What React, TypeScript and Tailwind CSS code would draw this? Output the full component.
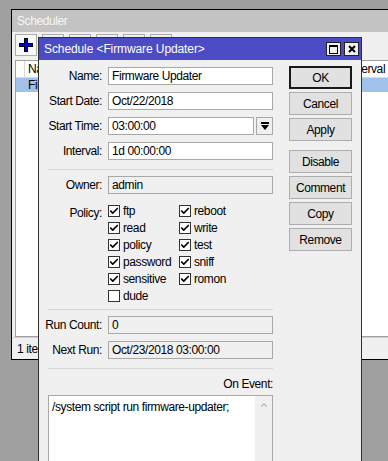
import { Check, ChevronUp } from 'lucide-react';

const font = { fontFamily: '"Liberation Sans", Arial, sans-serif' };

const policies: [string, boolean, string, boolean][] = [
  ['ftp', true, 'reboot', true],
  ['read', true, 'write', true],
  ['policy', true, 'test', true],
  ['password', true, 'sniff', true],
  ['sensitive', true, 'romon', true],
  ['dude', false, '', false],
];

function Box({ checked }: { checked: boolean }) {
  return (
    <span className="flex h-[12px] w-[12px] items-center justify-center border border-[#333] bg-white">
      {checked && <Check className="h-[10px] w-[10px] text-black" strokeWidth={4} />}
    </span>
  );
}

function Label({ text }: { text: string }) {
  return <span className="flex w-[54px] shrink-0 justify-end whitespace-nowrap">{text}</span>;
}

function Field({ label, value, readOnly }: { label: string; value: string; readOnly?: boolean }) {
  return (
    <div className="flex h-[18px] items-center">
      <Label text={label} />
      <div
        className={`ml-[6px] flex h-[18px] w-[165px] items-center border border-[#a8a8a8] px-[3px] ${
          readOnly ? 'bg-[#f0f0f0]' : 'bg-white'
        }`}
      >
        {value}
      </div>
    </div>
  );
}

function Btn({ label, primary }: { label: string; primary?: boolean }) {
  return (
    <div
      className={`flex h-[23px] w-[63px] items-center justify-center bg-[#e1e1e1] ${
        primary ? 'border-2 border-[#1a1a1a]' : 'border border-[#adadad]'
      }`}
    >
      {label}
    </div>
  );
}

export default function App() {
  return (
    <div
      className="relative h-[461px] w-[388px] overflow-hidden bg-[#a0a0a0] text-[12px] tracking-[-0.4px] text-black"
      style={font}
    >
      {/* Scheduler window behind */}
      <div className="absolute left-[11px] top-[9px] flex h-[351px] w-[400px] flex-col border border-black bg-[#f0f0f0]">
        <div className="flex h-[22px] items-center bg-[#c3c3c3] pl-[5px] text-[#f7f7f7]">Scheduler</div>
        <div className="flex h-[28px] items-start gap-[5px] px-[3px] pt-[2px]">
          <div className="flex h-[22px] w-[22px] items-center justify-center border border-[#adadad] bg-[#f7f7f7]">
            <svg width="14" height="14" viewBox="0 0 14 14">
              <path d="M5 0h4v5h5v4H9v5H5V9H0V5h5z" fill="#000" />
              <path d="M6 1h2v5h5v2H8v5H6V8H1V6h5z" fill="#0000e0" />
            </svg>
          </div>
          {[22, 22, 22, 22, 22].map((w, i) => (
            <div key={i} className="h-[22px] border border-[#adadad] bg-[#f0f0f0]" style={{ width: w }} />
          ))}
        </div>
        <div className="mx-[3px] flex flex-1 flex-col border border-[#a0a0a0] bg-white">
          <div className="flex h-[17px] items-center border-b border-[#d8d8d8]">
            <span className="h-full w-[9px] border-r border-[#d8d8d8]" />
            <span className="w-[321px] pl-[3px]">Name</span>
            <span className="pl-[3px]">Interval</span>
          </div>
          <div className="flex h-[14px] items-center bg-[#9fc1ea]">
            <span className="w-[9px]" />
            <span className="pl-[3px]">Firmware Updater</span>
          </div>
        </div>
        <div className="flex h-[22px] items-center border-t border-[#d0d0d0] pl-[5px]">1 item</div>
      </div>

      {/* Schedule dialog */}
      <div className="absolute left-[38px] top-[37px] flex h-[440px] w-[324px] flex-col border border-[#303030] bg-[#f0f0f0]">
        <div className="flex h-[22px] items-center justify-between bg-[#4b4bc6] pl-[5px] pr-[2px] tracking-[-0.1px] text-white">
          <span>Schedule &lt;Firmware Updater&gt;</span>
          <div className="flex gap-[3px]">
            <span className="flex h-[14px] w-[15px] items-center justify-center border border-[#222] bg-[#f0f0f0]">
              <span className="h-[9px] w-[9px] border border-black border-t-2" />
            </span>
            <span className="flex h-[14px] w-[15px] items-center justify-center border border-[#222] bg-[#f0f0f0]">
              <svg width="8" height="8" viewBox="0 0 8 8">
                <path d="M1 1l6 6M7 1l-6 6" stroke="#000" strokeWidth="2" />
              </svg>
            </span>
          </div>
        </div>

        <div className="flex pl-[9px] pt-[6px]">
          {/* form */}
          <div className="flex w-[225px] flex-col">
            <div className="flex flex-col gap-[7px] pt-[1px]">
              <Field label="Name:" value="Firmware Updater" />
              <Field label="Start Date:" value="Oct/22/2018" />
              <div className="flex h-[18px] items-center">
                <Label text="Start Time:" />
                <div className="ml-[6px] flex h-[18px] w-[146px] items-center border border-[#a8a8a8] bg-white px-[3px]">
                  03:00:00
                </div>
                <div className="ml-[2px] flex h-[18px] w-[17px] items-center justify-center border border-[#a8a8a8] bg-[#f0f0f0]">
                  <svg width="8" height="8" viewBox="0 0 8 8">
                    <path d="M0 0h8v2H0z" fill="#000" />
                    <path d="M0 3h8L4 8z" fill="#000" />
                  </svg>
                </div>
              </div>
              <Field label="Interval:" value="1d 00:00:00" />
            </div>

            <div className="mb-[6px] mt-[9px] border-t border-[#d6d6d6]" />
            <Field label="Owner:" value="admin" readOnly />

            <div className="mt-[8px] flex">
              <span className="w-[54px] pt-[2px] text-right">Policy:</span>
              <div className="ml-[6px] grid grid-cols-[71px_80px]">
                {policies.map(([a, ca, b, cb]) => (
                  <>
                    <div key={a} className="flex h-[17px] items-center gap-[3px]">
                      <Box checked={ca} />
                      <span>{a}</span>
                    </div>
                    <div key={a + 'b'} className="flex h-[17px] items-center gap-[3px]">
                      {b && <Box checked={cb} />}
                      <span>{b}</span>
                    </div>
                  </>
                ))}
              </div>
            </div>

            <div className="mb-[6px] mt-[5px] border-t border-[#d6d6d6]" />
            <div className="flex flex-col gap-[7px]">
              <Field label="Run Count:" value="0" readOnly />
              <Field label="Next Run:" value="Oct/23/2018 03:00:00" readOnly />
            </div>
            <div className="mt-[9px] border-t border-[#d6d6d6]" />
            <div className="pt-[8px] text-right leading-[14px]">On Event:</div>
            <div className="mt-[4px] flex h-[80px] border border-[#a8a8a8] bg-white">
              <div className="flex-1 px-[3px] pt-[2px]">/system script run firmware-updater;</div>
              <div className="flex w-[17px] justify-center bg-[#f0f0f0] pt-[4px]">
                <ChevronUp className="h-[10px] w-[10px] text-[#a0a0a0]" strokeWidth={2.5} />
              </div>
            </div>
          </div>

          {/* buttons */}
          <div className="ml-[16px] flex flex-col">
            <div className="flex flex-col gap-[3px]">
              <Btn label="OK" primary />
              <Btn label="Cancel" />
              <Btn label="Apply" />
            </div>
            <div className="mt-[9px] flex flex-col gap-[3px]">
              <Btn label="Disable" />
              <Btn label="Comment" />
              <Btn label="Copy" />
              <Btn label="Remove" />
            </div>
          </div>
        </div>
      </div>
    </div>
  );
}
